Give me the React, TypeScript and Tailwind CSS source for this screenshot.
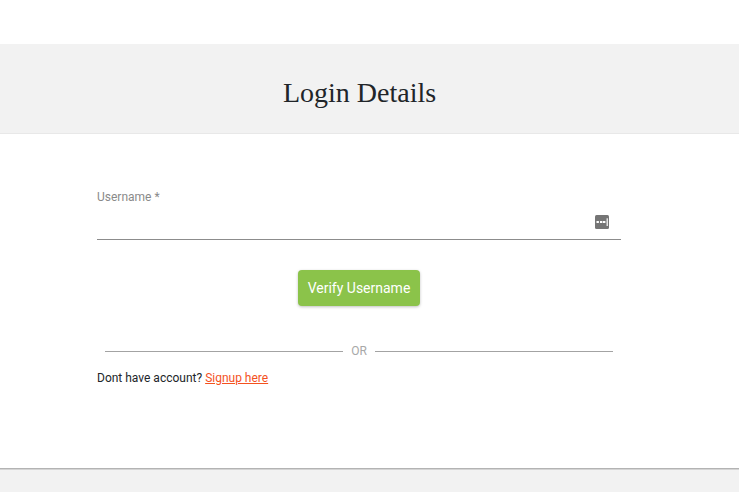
export default function App() {
  return (
    <div className="h-[492px] w-full overflow-hidden bg-white font-['Roboto',sans-serif]">
      <div className="h-11" />
      <header className="flex h-[90px] items-center justify-center border-b border-[#e8e8e8] bg-[#f2f2f2] pr-5 pt-2">
        <h1 className="font-['Liberation_Serif',serif] text-[28px] leading-none text-[#212529]">Login Details</h1>
      </header>
      <main className="h-[334px] pl-[97px] pr-[118px] pt-[56px]">
        <div className="relative h-[50px] border-b border-[#8c8c8c]">
          <label className="block text-[12px] leading-[14px] text-[#8a8a8a]">Username *</label>
          <svg className="absolute right-3 top-[25px]" width="14" height="14" viewBox="0 0 14 14" aria-hidden="true">
            <rect width="14" height="14" rx="1.5" fill="#757575" />
            <rect x="1.5" y="6" width="2.4" height="2" fill="#fff" />
            <rect x="5" y="6" width="2.4" height="2" fill="#fff" />
            <rect x="8" y="6" width="2.4" height="2" fill="#fff" />
            <rect x="11.6" y="3.3" width="1.2" height="7.7" fill="#fff" />
          </svg>
        </div>
        <div className="mt-[30px] flex justify-center">
          <button className="h-9 w-[122px] rounded bg-[#8bc34a] text-[14px] text-white shadow-[0_1px_3px_rgba(0,0,0,0.25)]">Verify Username</button>
        </div>
        <div className="mt-[35px] flex h-5 items-center px-2">
          <div className="h-px w-[238px] bg-[#a3a3a3]" />
          <span className="w-8 text-center text-[12px] text-[#a8a8a8]">OR</span>
          <div className="h-px flex-1 bg-[#a3a3a3]" />
        </div>
        <p className="mt-[10px] text-[12px] leading-[14px] text-[#212529]">
          Dont have account? <a className="text-[#f4511e] underline" href="#">Signup here</a>
        </p>
      </main>
      <div className="h-px bg-[#b3b3b3]" />
      <div className="h-px bg-[#d4d4d4]" />
      <footer className="h-[22px] bg-[#f2f2f2]" />
    </div>
  );
}
